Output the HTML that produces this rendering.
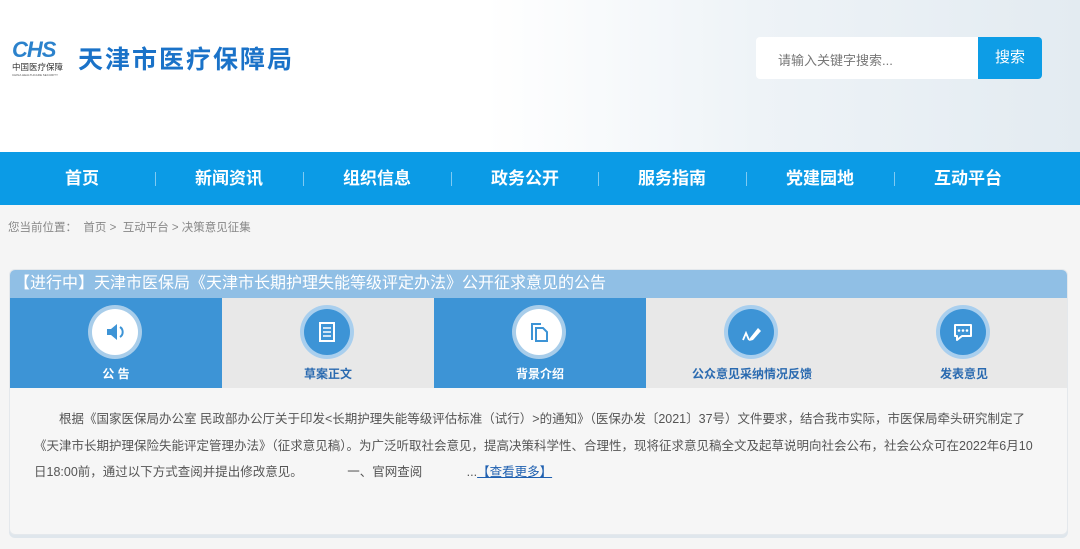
<!DOCTYPE html>
<html><head><meta charset="utf-8"><style>
*{margin:0;padding:0;box-sizing:border-box}
body{width:1080px;height:549px;overflow:hidden;background:#f5f5f5;font-family:"Liberation Sans","Noto Sans CJK SC",sans-serif;position:relative}
.hdr{position:absolute;left:0;top:0;width:1080px;height:152px;background:linear-gradient(90deg,#fff 0%,#fff 45%,#eef3f7 70%,#e3ebf1 100%)}
.title{position:absolute;left:78px;top:40px;font-size:25px;font-weight:bold;color:#1a72c8;letter-spacing:2px}
.logo{position:absolute;left:12px;top:40px}
.search{position:absolute;left:756px;top:37px;width:222px;height:42px;background:#fff;border-radius:4px 0 0 4px;font-size:13px;color:#777;padding:13px 0 0 22px}
.btn{position:absolute;left:978px;top:37px;width:64px;height:42px;background:#0d9de6;border-radius:0 4px 4px 0;color:#fff;font-size:15px;text-align:center;line-height:42px}
.nav{position:absolute;left:0;top:152px;width:1080px;height:53px;background:#0b9be6}
.nav div{position:absolute;top:0;width:148px;text-align:center;line-height:53px;color:#fff;font-size:17px;font-weight:bold}
.nav i{position:absolute;top:20px;width:1px;height:14px;background:#7fcaf2}
.bc{position:absolute;left:8px;top:219px;font-size:11.5px;color:#888}
.panel{position:absolute;left:9px;top:269px;width:1059px;height:266px;background:#f6f6f6;border-radius:6px;box-shadow:0 3px 0 #dfe6ec;border:1px solid #e4e8ec;overflow:hidden}
.ptitle{height:28px;background:#90bfe5;color:#fff;font-size:16px;line-height:28px;padding-left:4px}
.tab{position:absolute;top:28px;width:212px;height:90px;text-align:center;font-size:12px;font-weight:bold}
.tab .c{position:absolute;left:82px;top:11px;width:46px;height:46px;border-radius:50%}
.tab span{position:absolute;left:0;right:0;top:67px}
.on{background:#3d94d6;color:#fff}.on .c{background:#fff;box-shadow:0 0 0 4px #a8cdea}
.off{background:#e8e8e8;color:#2a6ab0}.off .c{background:#3d94d6;box-shadow:0 0 0 4px #a9cfee}
.txt{position:absolute;left:24px;top:136px;width:1000px;font-size:12.5px;color:#555;line-height:26.5px}
.txt a{color:#1f60b0;text-decoration:underline}
</style></head><body>
<div class="hdr"></div>
<div class="logo"><div style="font:italic bold 22px 'Liberation Sans';color:#2b82cc;letter-spacing:-1px;line-height:20px">CHS</div><div style="font-size:8.5px;color:#333;margin-top:1px">中国医疗保障</div><div style="font-size:3px;color:#555">CHINA HEALTHCARE SECURITY</div></div>
<div class="title">天津市医疗保障局</div>
<div class="search">请输入关键字搜索...</div><div class="btn">搜索</div>
<div class="nav">
<div style="left:8px">首页</div><i style="left:155px"></i>
<div style="left:155px">新闻资讯</div><i style="left:303px"></i>
<div style="left:303px">组织信息</div><i style="left:451px"></i>
<div style="left:451px">政务公开</div><i style="left:598px"></i>
<div style="left:598px">服务指南</div><i style="left:746px"></i>
<div style="left:746px">党建园地</div><i style="left:894px"></i>
<div style="left:894px">互动平台</div>
</div>
<div class="bc">您当前位置：&nbsp; 首页 &gt;&nbsp; 互动平台 &gt; 决策意见征集</div>
<div class="panel">
<div class="ptitle">【进行中】天津市医保局《天津市长期护理失能等级评定办法》公开征求意见的公告</div>
<div class="tab on" style="left:0"><div class="c"><svg width="46" height="46" viewBox="0 0 46 46"><path d="M15 20h4l6-5v16l-6-5h-4z" fill="#3d94d6"/><path d="M28 18a6 6 0 0 1 0 10" stroke="#3d94d6" stroke-width="2" fill="none"/></svg></div><span>公 告</span></div>
<div class="tab off" style="left:212px"><div class="c"><svg width="46" height="46" viewBox="0 0 46 46"><rect x="16" y="14" width="14" height="18" fill="none" stroke="#fff" stroke-width="2"/><path d="M19 19h8M19 23h8M19 27h8" stroke="#fff" stroke-width="1.5"/></svg></div><span>草案正文</span></div>
<div class="tab on" style="left:424px"><div class="c"><svg width="46" height="46" viewBox="0 0 46 46"><path d="M16 31V15h9" fill="none" stroke="#3d94d6" stroke-width="2"/><path d="M20 32V19h7l4 4v9z" fill="none" stroke="#3d94d6" stroke-width="2"/></svg></div><span>背景介绍</span></div>
<div class="tab off" style="left:636px"><div class="c"><svg width="46" height="46" viewBox="0 0 46 46"><path d="M15 31l3-7 3 7" fill="none" stroke="#fff" stroke-width="1.8"/><path d="M22 29l8-10 3 3-8 9-4 1z" fill="#fff"/></svg></div><span>公众意见采纳情况反馈</span></div>
<div class="tab off" style="left:848px"><div class="c"><svg width="46" height="46" viewBox="0 0 46 46"><path d="M15 16h16v11h-9l-5 4v-4h-2z" fill="none" stroke="#fff" stroke-width="2" stroke-linejoin="round"/><circle cx="19" cy="21.5" r="1.3" fill="#fff"/><circle cx="23" cy="21.5" r="1.3" fill="#fff"/><circle cx="27" cy="21.5" r="1.3" fill="#fff"/></svg></div><span>发表意见</span></div>
<div class="txt">&emsp;&emsp;根据《国家医保局办公室 民政部办公厅关于印发&lt;长期护理失能等级评估标准（试行）&gt;的通知》（医保办发〔2021〕37号）文件要求，结合我市实际，市医保局牵头研究制定了《天津市长期护理保险失能评定管理办法》（征求意见稿）。为广泛听取社会意见，提高决策科学性、合理性，现将征求意见稿全文及起草说明向社会公布，社会公众可在2022年6月10日18:00前，通过以下方式查阅并提出修改意见。&emsp;&emsp;&emsp;&nbsp; 一、官网查阅&emsp;&emsp;&emsp;&nbsp; ...<a>【查看更多】</a></div>
</div>
</body></html>
